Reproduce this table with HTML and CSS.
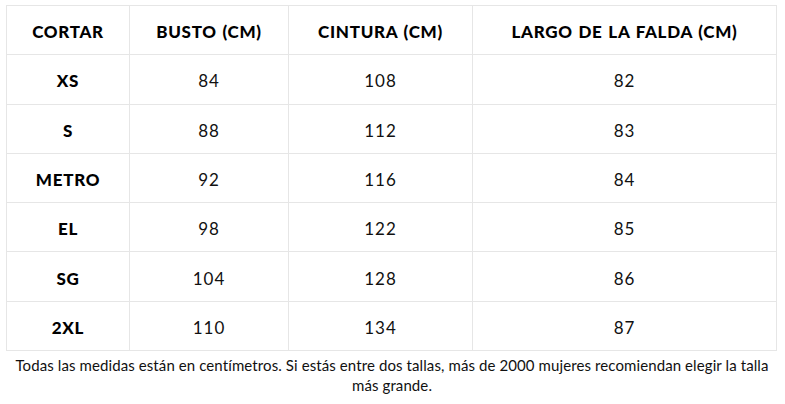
FILE: index.html
```html
<!DOCTYPE html>
<html lang="es">
<head>
<meta charset="utf-8">
<link rel="stylesheet" href="styles.css">
</head>
<body>
<div class="wrap">
  <table class="size-table">
    <thead>
      <tr>
        <th class="c1">CORTAR</th>
        <th class="c2">BUSTO (CM)</th>
        <th class="c3">CINTURA (CM)</th>
        <th class="c4">LARGO DE LA FALDA (CM)</th>
      </tr>
    </thead>
    <tbody>
      <tr><th>XS</th><td>84</td><td>108</td><td>82</td></tr>
      <tr><th>S</th><td>88</td><td>112</td><td>83</td></tr>
      <tr><th>METRO</th><td>92</td><td>116</td><td>84</td></tr>
      <tr><th>EL</th><td>98</td><td>122</td><td>85</td></tr>
      <tr><th>SG</th><td>104</td><td>128</td><td>86</td></tr>
      <tr><th>2XL</th><td>110</td><td>134</td><td>87</td></tr>
    </tbody>
  </table>
  <p class="note">Todas las medidas están en centímetros. Si estás entre dos tallas, más de 2000 mujeres recomiendan elegir la talla más grande.</p>
</div>
</body>
</html>
```
FILE: styles.css
```css
html, body {
  margin: 0;
  padding: 0;
  background: #fff;
}
body {
  font-family: "Lato", "DejaVu Sans", sans-serif;
  color: #000;
}
.wrap {
  padding: 5px 9px 0 6px;
}
.size-table {
  width: 770px;
  border-collapse: collapse;
  table-layout: fixed;
}
.size-table tr {
  height: 49.3px;
}
.size-table th,
.size-table td {
  box-sizing: border-box;
  border: 1px solid #e6e6e6;
  padding: 3px 0 0;
  text-align: center;
  vertical-align: middle;
}
.size-table th {
  font-weight: 900;
  font-size: 17px;
  letter-spacing: 0.7px;
  word-spacing: 1px;
}
.size-table td {
  font-size: 17px;
  font-weight: 400;
  letter-spacing: 1px;
  color: #111;
}
.c1 { width: 123px; }
.c2 { width: 159px; }
.c3 { width: 184px; }
.c4 { width: 304px; }
.note {
  margin: 4px 0 0;
  padding-left: 2px;
  text-align: center;
  font-size: 15px;
  line-height: 20px;
  letter-spacing: 0.1px;
  color: #111;
}
```
